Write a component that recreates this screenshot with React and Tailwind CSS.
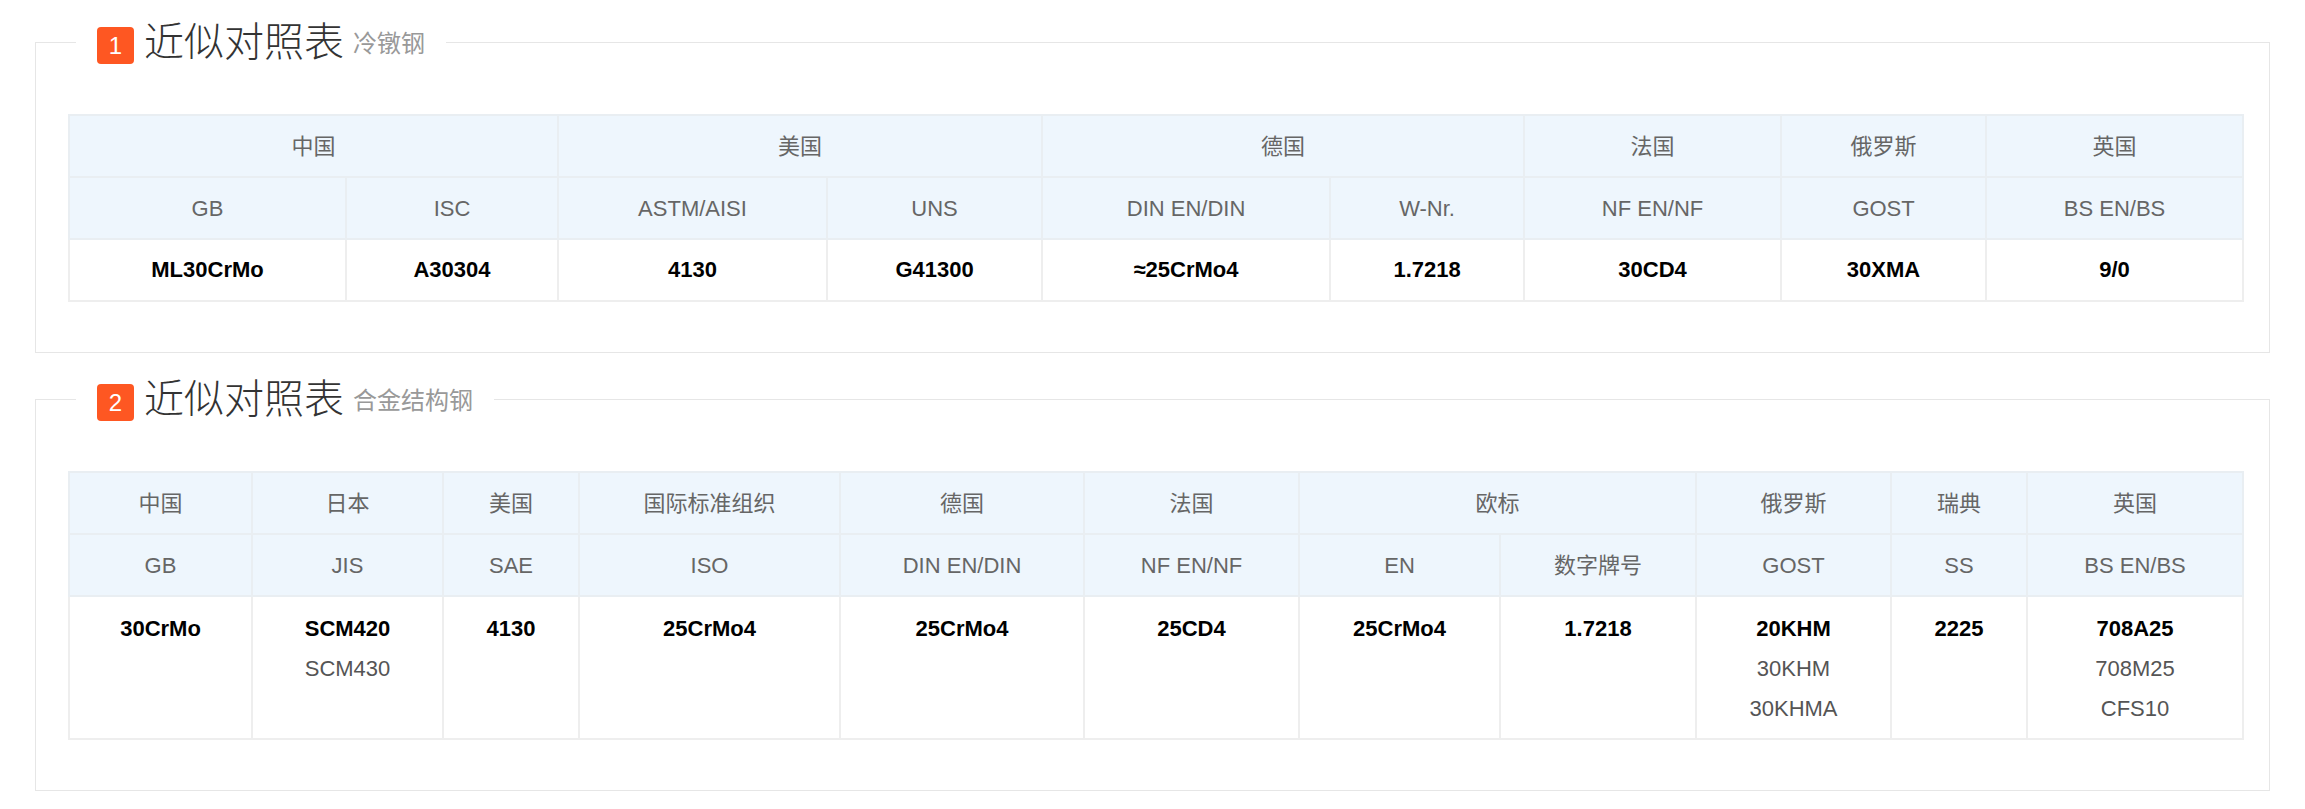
const F = { fontFamily: '"Liberation Sans", "Noto Sans CJK SC", sans-serif' };

function Section({ n, sub, groups, cols, rows, widths, bodyH }) {
  return (
    <fieldset className="mx-[35px] border border-[#e6e6e6] px-[32px] pt-[50px] pb-[50px] min-w-0">
      <legend className="ml-[8px] px-[21px] flex items-end">
        <span className="w-[37px] h-[37px] rounded-[4px] bg-[#fe5722] text-white text-[24px] flex items-center justify-center">{n}</span>
        <span className="ml-[10px] text-[40px] leading-[44px] text-[#333] font-light">近似对照表</span>
        <span className="ml-[9px] mb-[2px] text-[24px] text-[#999]">{sub}</span>
      </legend>
      <table className="w-full table-fixed border-collapse text-[22px]">
        <colgroup>{widths.map((w, i) => <col key={i} style={{ width: w }} />)}</colgroup>
        <thead className="bg-[#eef6fd] text-[#666]">
          <tr className="h-[62px]">
            {groups.map(([t, s], i) => <th key={i} colSpan={s} className="border-2 border-[#e9eef2] font-normal">{t}</th>)}
          </tr>
          <tr className="h-[62px]">
            {cols.map((t, i) => <th key={i} className="border-2 border-[#e9eef2] font-normal">{t}</th>)}
          </tr>
        </thead>
        <tbody>
          <tr style={{ height: bodyH }}>
            {rows.map((c, i) => (
              <td key={i} className={"border-2 border-[#eeeeee] text-center " + (bodyH > 70 ? "align-top pt-[12px]" : "")}>
                {c.map((v, j) => <div key={j} className={"leading-[40px] " + (j === 0 ? "font-bold text-black" : "text-[#555]")}>{v}</div>)}
              </td>
            ))}
          </tr>
        </tbody>
      </table>
    </fieldset>
  );
}

export default function App() {
  return (
    <div style={F} className="bg-white w-[2305px] h-[809px] pt-[20px]">
      <Section n="1" sub="冷镦钢"
        widths={[277, 212, 269, 215, 288, 194, 257, 205, 257]}
        groups={[["中国", 2], ["美国", 2], ["德国", 2], ["法国", 1], ["俄罗斯", 1], ["英国", 1]]}
        cols={["GB", "ISC", "ASTM/AISI", "UNS", "DIN EN/DIN", "W-Nr.", "NF EN/NF", "GOST", "BS EN/BS"]}
        rows={[["ML30CrMo"], ["A30304"], ["4130"], ["G41300"], ["≈25CrMo4"], ["1.7218"], ["30CD4"], ["30XMA"], ["9/0"]]}
        bodyH={62} />
      <div className="h-[24px]" />
      <Section n="2" sub="合金结构钢"
        widths={[183, 191, 136, 261, 244, 215, 201, 196, 195, 136, 216]}
        groups={[["中国", 1], ["日本", 1], ["美国", 1], ["国际标准组织", 1], ["德国", 1], ["法国", 1], ["欧标", 2], ["俄罗斯", 1], ["瑞典", 1], ["英国", 1]]}
        cols={["GB", "JIS", "SAE", "ISO", "DIN EN/DIN", "NF EN/NF", "EN", "数字牌号", "GOST", "SS", "BS EN/BS"]}
        rows={[["30CrMo"], ["SCM420", "SCM430"], ["4130"], ["25CrMo4"], ["25CrMo4"], ["25CD4"], ["25CrMo4"], ["1.7218"], ["20KHM", "30KHM", "30KHMA"], ["2225"], ["708A25", "708M25", "CFS10"]]}
        bodyH={143} />
    </div>
  );
}
